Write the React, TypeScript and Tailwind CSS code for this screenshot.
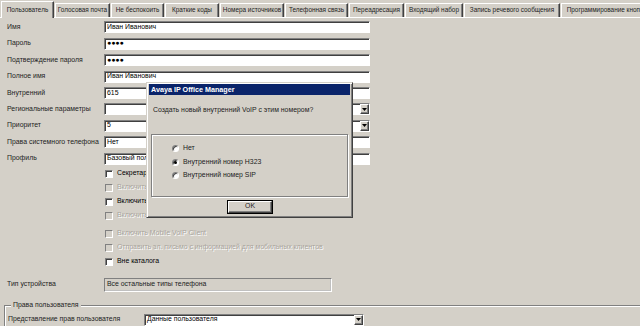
import React from "react";

const tabs: { t: string; w: number; sel?: boolean }[] = [
  { t: "Пользователь", w: 54, sel: true },
  { t: "Голосовая почта", w: 56 },
  { t: "Не беспокоить", w: 54 },
  { t: "Краткие коды", w: 55 },
  { t: "Номера источников", w: 65 },
  { t: "Телефонная связь", w: 64 },
  { t: "Переадресация", w: 56 },
  { t: "Входящий набор", w: 59 },
  { t: "Запись речевого сообщения", w: 97 },
  { t: "Программирование кнопок", w: 92 },
];

function Arrow() {
  return (
    <svg width="5" height="3" viewBox="0 0 5 3" className="block">
      <path d="M0 0H5L2.5 3Z" fill="#000" />
    </svg>
  );
}

function Field({ value, combo, w = 266 }: { value?: string; combo?: boolean; w?: number }) {
  return (
    <div
      className="relative h-[12px] bg-white border border-t-[#808080] border-l-[#808080] border-b-white border-r-white shadow-[inset_1px_1px_0_#404040] flex items-center pl-[2px] overflow-hidden whitespace-nowrap"
      style={{ width: w }}
    >
      <span className="text-black">{value}</span>
      {combo && (
        <div className="absolute right-0 top-0 w-[9px] h-[10px] bg-[#d4d0c8] border border-t-white border-l-white border-b-[#404040] border-r-[#404040] shadow-[inset_-1px_-1px_0_#808080] flex items-center justify-center">
          <Arrow />
        </div>
      )}
    </div>
  );
}

function Row({ label, children }: { label: string; children: React.ReactNode }) {
  return (
    <div className="flex items-center h-[16.44px]">
      <div className="w-[97px] text-[#222222]">{label}</div>
      {children}
    </div>
  );
}

function Check({ label, disabled }: { label: string; disabled?: boolean }) {
  return (
    <div className="flex items-center h-[14px] pl-[98px]">
      <span
        className={
          disabled
            ? "w-[8px] h-[8px] bg-[#d4d0c8] border border-t-[#808080] border-l-[#808080] border-b-white border-r-white"
            : "w-[8px] h-[8px] bg-white border border-t-[#808080] border-l-[#808080] border-b-white border-r-white shadow-[inset_1px_1px_0_#404040]"
        }
      />
      <span
        className={
          disabled
            ? "ml-[4px] text-[#a8a49c] [text-shadow:1px_1px_0_#ffffff] whitespace-nowrap"
            : "ml-[4px] text-black whitespace-nowrap"
        }
      >
        {label}
      </span>
    </div>
  );
}

function Radio({ label, on }: { label: string; on?: boolean }) {
  return (
    <div className="flex items-center h-[13.5px]">
      <span className="relative w-[7px] h-[7px] rounded-full bg-white border border-t-[#808080] border-l-[#808080] border-b-white border-r-white shadow-[inset_1px_1px_0_#404040] flex items-center justify-center">
        {on && <span className="w-[3px] h-[3px] rounded-full bg-black" />}
      </span>
      <span className="ml-[4px] text-[#222222] whitespace-nowrap">{label}</span>
    </div>
  );
}

export default function App() {
  return (
    <div className="relative w-[640px] h-[326px] overflow-hidden bg-[#d4d0c8] font-['Liberation_Sans',Arial,sans-serif] text-[6.9px] leading-none text-black">
      {/* tabs */}
      <div className="flex items-end h-[18px] pl-[1px] border-b border-white text-[6.4px]">
        {tabs.map((tab) => (
          <div
            key={tab.t}
            className={
              tab.sel
                ? "relative z-10 -mb-px h-[17px] bg-[#d4d0c8] border-t border-l border-t-white border-l-white border-r border-r-[#404040] shadow-[inset_-1px_0_0_#808080] flex items-start pt-[5px] justify-center whitespace-nowrap overflow-hidden shrink-0 text-[#222222]"
                : "h-[14px] ml-px border-t border-l border-t-white border-l-white border-r border-r-[#404040] shadow-[inset_-1px_0_0_#808080] flex items-center justify-center whitespace-nowrap overflow-hidden shrink-0 text-[#222222]"
            }
            style={{ width: tab.w - 1 }}
          >
            {tab.t}
          </div>
        ))}
      </div>

      {/* form */}
      <div className="pl-[7px] pt-[1px]">
        <Row label="Имя">
          <Field value="Иван Иванович" />
        </Row>
        <Row label="Пароль">
          <Field value="●●●●" />
        </Row>
        <Row label="Подтверждение пароля">
          <Field value="●●●●" />
        </Row>
        <Row label="Полное имя">
          <Field value="Иван Иванович" />
        </Row>
        <Row label="Внутренний">
          <Field value="615" />
        </Row>
        <Row label="Региональные параметры">
          <Field combo />
        </Row>
        <Row label="Приоритет">
          <Field value="5" combo />
        </Row>
        <Row label="Права системного телефона">
          <Field value="Нет" />
        </Row>
        <Row label="Профиль">
          <Field value="Базовый пользователь" />
        </Row>

        <Check label="Секретарь" />
        <Check label="Включить Softphone" disabled />
        <Check label="Включить one-X Portal Services" />
        <Check label="Включить one-X TeleCommuter" disabled />
        <div className="h-[4px]" />
        <Check label="Включить Mobile VoIP Client" disabled />
        <Check label="Отправить эл. письмо с информацией для мобильных клиентов" disabled />
        <Check label="Вне каталога" />

        <div className="flex items-center h-[14px] mt-[9px]">
          <div className="w-[97px] text-[#222222]">Тип устройства</div>
          <div className="w-[228px] h-[14px] bg-[#d4d0c8] border border-t-[#808080] border-l-[#808080] border-b-white border-r-white shadow-[inset_-1px_-1px_0_#c0c0c0] flex items-center pl-[2px] text-[#222222]">
            Все остальные типы телефона
          </div>
        </div>
      </div>

      {/* group box */}
      <div className="relative mt-[13px] ml-[4px] w-[640px] h-[40px] border border-[#808080] shadow-[1px_1px_0_#ffffff,inset_1px_1px_0_#ffffff] pt-[8px] pl-[3px]">
        <span className="absolute -top-[4px] left-[6px] px-[2px] bg-[#d4d0c8] text-[#222222] whitespace-nowrap">
          Права пользователя
        </span>
        <div className="flex items-center h-[12px]">
          <div className="w-[136px] text-[#222222]">Представление прав пользователя</div>
          <Field value="Данные пользователя" combo w={220} />
        </div>
      </div>

      {/* dialog */}
      <div className="absolute left-[146px] top-[82px] w-[207px] h-[136px] bg-[#d4d0c8] border border-t-[#d4d0c8] border-l-[#d4d0c8] border-b-[#404040] border-r-[#404040] shadow-[inset_1px_1px_0_#ffffff,inset_-1px_-1px_0_#808080] p-[1px]">
        <div className="h-[11px] mx-[1px] bg-[#0a246a] text-white font-bold text-[7.2px] flex items-center pl-[2px] whitespace-nowrap">
          Avaya IP Office Manager
        </div>
        <div className="mt-[12px] pl-[5px] text-[#222222] whitespace-nowrap">
          Создать новый внутренний VoIP с этим номером?
        </div>
        <div className="mt-[20px] mx-[3px] h-[63px] border border-[#808080] shadow-[1px_1px_0_#ffffff,inset_1px_1px_0_#ffffff] pl-[20px] pt-[7px]">
          <Radio label="Нет" />
          <Radio label="Внутренний номер H323" on />
          <Radio label="Внутренний номер SIP" />
        </div>
        <div className="mt-[3px] flex justify-center pr-[24px] pl-[25px]">
          <div className="w-[46px] h-[14px] border border-black bg-[#d4d0c8] flex items-center justify-center">
            <div className="w-full h-full border border-t-white border-l-white border-b-[#404040] border-r-[#404040] shadow-[inset_-1px_-1px_0_#808080] flex items-center justify-center text-[#222222]">
              OK
            </div>
          </div>
        </div>
      </div>
    </div>
  );
}
